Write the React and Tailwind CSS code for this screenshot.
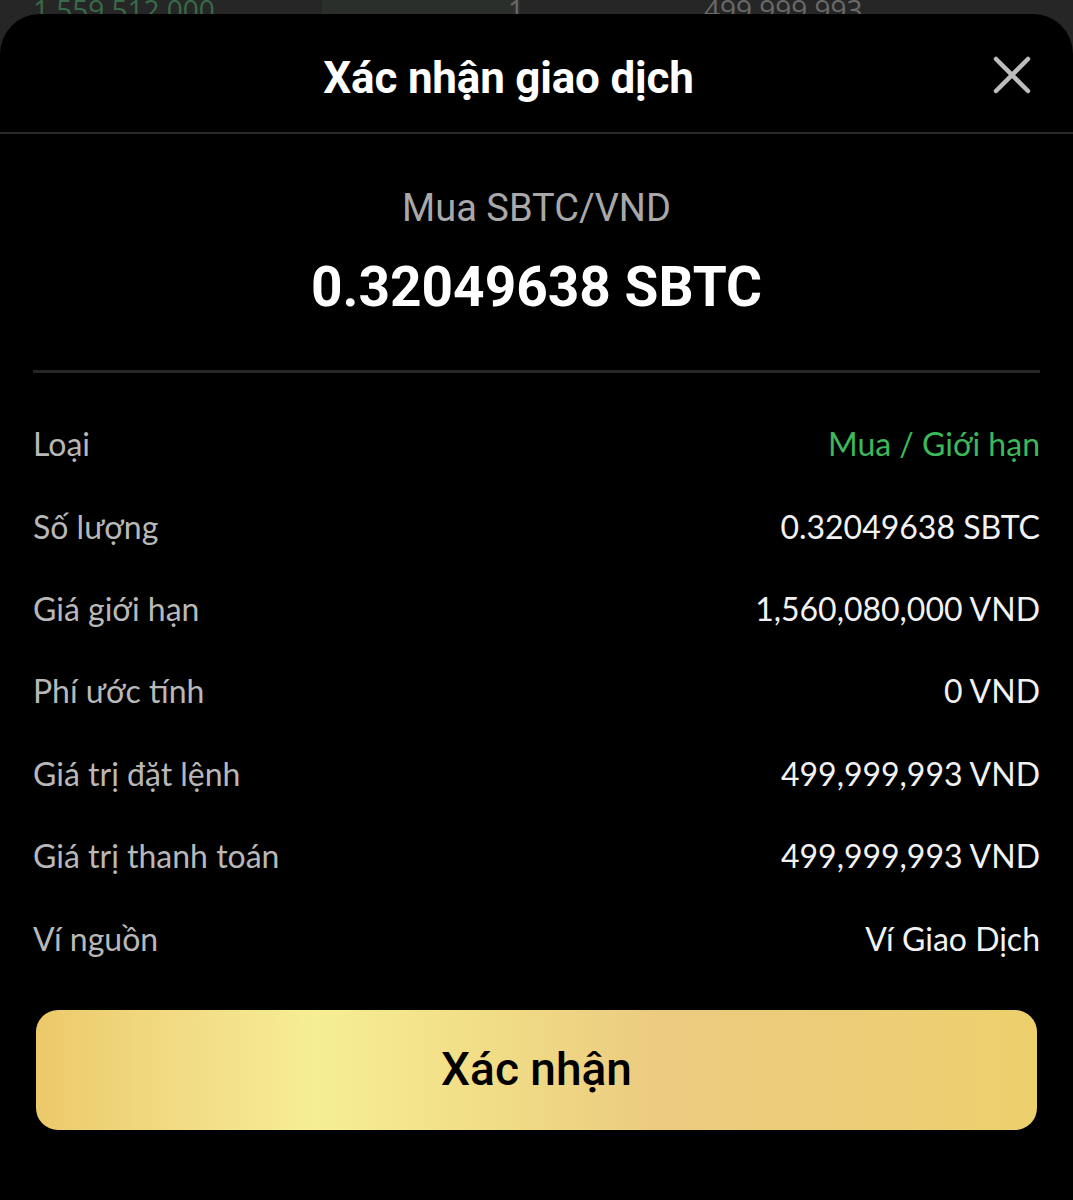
import React from 'react';

const rows = [
  { label: 'Loại', value: 'Mua / Giới hạn', green: true },
  { label: 'Số lượng', value: '0.32049638 SBTC' },
  { label: 'Giá giới hạn', value: '1,560,080,000 VND' },
  { label: 'Phí ước tính', value: '0 VND' },
  { label: 'Giá trị đặt lệnh', value: '499,999,993 VND' },
  { label: 'Giá trị thanh toán', value: '499,999,993 VND' },
  { label: 'Ví nguồn', value: 'Ví Giao Dịch' },
];

function CloseIcon() {
  return (
    <svg width="38" height="38" viewBox="0 0 38 38" fill="none">
      <path d="M3 3 L35 35 M35 3 L3 35" stroke="#bdbdbd" strokeWidth="4.5" strokeLinecap="round" />
    </svg>
  );
}

export default function App() {
  return (
    <div className="w-[1073px] h-[1200px] bg-[#262626] overflow-hidden flex flex-col font-['Roboto',sans-serif]">
      {/* background page peeking above the sheet */}
      <div className="h-[14px] relative shrink-0 overflow-hidden">
        <div className="absolute left-[322px] top-0 w-[198px] h-[14px] bg-[#2b2f2c]" />
        <div className="absolute left-[33px] -top-[12px] text-[28px] text-[#3a6b48] font-['Open_Sans',sans-serif]">1,559,512,000</div>
        <div className="absolute left-[508px] -top-[12px] text-[28px] text-[#6a6a6a] font-['Open_Sans',sans-serif]">1</div>
        <div className="absolute left-[704px] -top-[12px] text-[28px] text-[#6a6a6a] font-['Open_Sans',sans-serif]">499,999,993</div>
      </div>

      <div className="flex-1 bg-black rounded-t-[40px] flex flex-col">
        {/* header */}
        <div className="relative h-[120px] flex items-center justify-center border-b-2 border-[#2a2a2a]">
          <h1 className="text-[44px] font-bold text-white tracking-[-0.2px] -ml-[56px] pt-[10px]">Xác nhận giao dịch</h1>
          <button className="absolute right-[42px] top-[42px]">
            <CloseIcon />
          </button>
        </div>

        {/* summary */}
        <div className="flex flex-col items-center pt-[52px]">
          <p className="text-[38px] text-[#a8a8a8] leading-[44px]">Mua SBTC/VND</p>
          <p className="text-[55px] font-bold text-white leading-[62px] mt-[26px]">0.32049638 SBTC</p>
        </div>

        <div className="mx-[33px] mt-[52px] h-[3px] bg-[#262626]" />

        {/* details */}
        <div className="px-[33px] pt-[30px] flex flex-col font-['Lato',sans-serif] text-[32px]">
          {rows.map((row) => (
            <div key={row.label} className="flex justify-between items-center h-[82.4px]">
              <span className="text-[#b8b8b8]">{row.label}</span>
              <span className={row.green ? 'text-[#3cb95a]' : 'text-[#f2f2f2]'}>{row.value}</span>
            </div>
          ))}
        </div>

        {/* confirm */}
        <div className="px-[36px] pt-[30px]">
          <button className="w-full h-[120px] rounded-[22px] bg-[linear-gradient(90deg,#ecc96a_0%,#f3e08a_18%,#f6ee95_28%,#f2e088_42%,#ebcb80_62%,#ebcd78_80%,#edd06c_100%)] text-black text-[46px] font-medium">
            Xác nhận
          </button>
        </div>
      </div>
    </div>
  );
}
